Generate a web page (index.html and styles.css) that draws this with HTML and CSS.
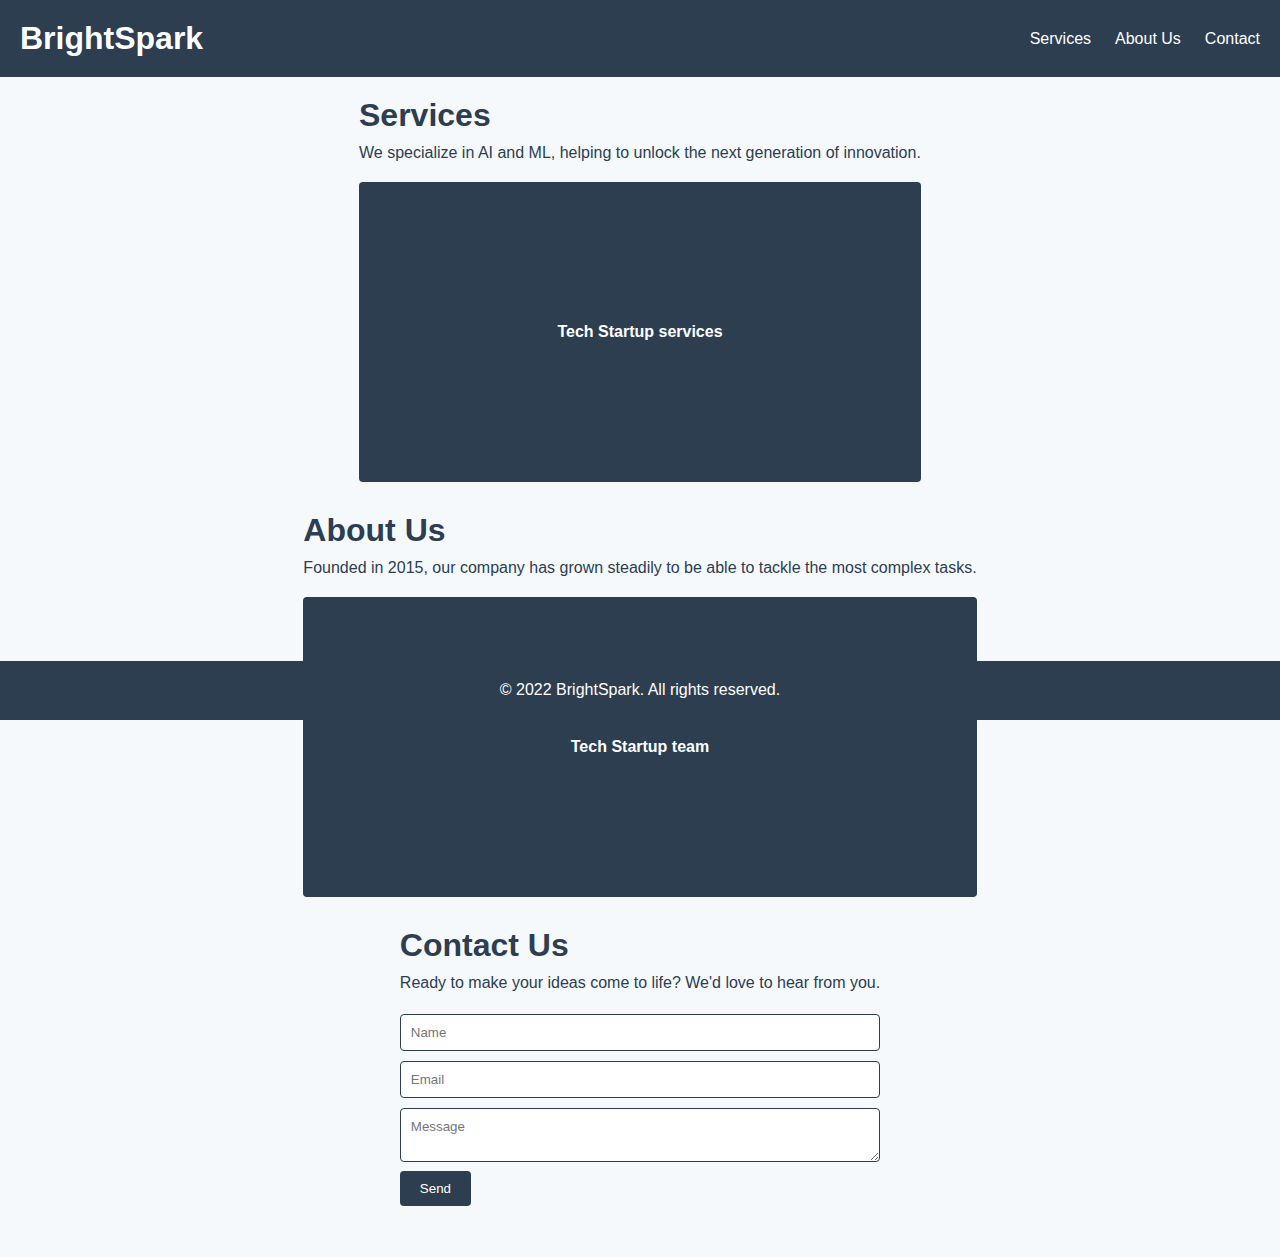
FILE: index.html
```html
<!DOCTYPE html>
<html lang="en">
<head>
<meta charset="utf-8">
<title>BrightSpark</title>
<link rel="stylesheet" href="styles.css">
</head>
<body>
<header class="site-header">
  <h1 class="logo">BrightSpark</h1>
  <nav class="nav">
    <a href="#services">Services</a>
    <a href="#about">About Us</a>
    <a href="#contact">Contact</a>
  </nav>
</header>
<main class="main">
  <section class="section" id="services">
    <h2 class="section-title">Services</h2>
    <p class="section-text">We specialize in AI and ML, helping to unlock the next generation of innovation.</p>
    <div class="media media-services">Tech Startup services</div>
  </section>
  <section class="section" id="about">
    <h2 class="section-title">About Us</h2>
    <p class="section-text">Founded in 2015, our company has grown steadily to be able to tackle the most complex tasks.</p>
    <div class="media media-about">Tech Startup team</div>
  </section>
  <section class="section" id="contact">
    <h2 class="section-title">Contact Us</h2>
    <p class="section-text">Ready to make your ideas come to life? We'd love to hear from you.</p>
    <form class="form">
      <input class="field" type="text" placeholder="Name">
      <input class="field" type="email" placeholder="Email">
      <textarea class="field" placeholder="Message"></textarea>
      <button class="btn" type="button">Send</button>
    </form>
  </section>
</main>
<footer class="footer">© 2022 BrightSpark. All rights reserved.</footer>
</body>
</html>
```
FILE: styles.css
```css
html, body {
  margin: 0;
  padding: 0;
}
body {
  font-family: "Liberation Sans", Arial, sans-serif;
  background: #f5f9fc;
  color: #2c3e50;
  position: relative;
}
.site-header {
  display: flex;
  justify-content: space-between;
  align-items: center;
  padding: 20px;
  background: #2c3e50;
  color: #fff;
}
.logo {
  margin: 0;
  font-size: 32px;
  font-weight: bold;
  line-height: normal;
}
.nav {
  display: flex;
  gap: 24px;
}
.nav a {
  color: #fff;
  text-decoration: none;
  font-size: 16px;
}
.main {
  display: flex;
  flex-direction: column;
  align-items: center;
  padding-bottom: 50px;
}
.section {
  padding-top: 20px;
}
.section-title {
  margin: 0 0 10px;
  font-size: 32px;
  line-height: normal;
}
.section-text {
  margin: 0 0 20px;
  font-size: 16px;
  line-height: normal;
}
.media {
  display: flex;
  align-items: center;
  justify-content: center;
  height: 300px;
  margin-bottom: 10px;
  background: #2c3e50;
  color: #fff;
  font-weight: bold;
  font-size: 16px;
  border-radius: 4px;
}
.media-services {
  width: 562px;
}
.media-about {
  width: 100%;
}
.form {
  display: flex;
  flex-direction: column;
  align-items: flex-start;
  gap: 10px;
  padding-top: 2px;
}
.field {
  display: block;
  box-sizing: border-box;
  width: 100%;
  margin: 0;
  padding: 10px;
  border: 1px solid #2c3e50;
  border-radius: 4px;
  background: #fff;
  font-family: "Liberation Sans", Arial, sans-serif;
  font-size: 13.333px;
  color: #2c3e50;
}
textarea.field {
  height: 54px;
}
.field::placeholder {
  color: #757575;
}
.btn {
  margin-top: -1px;
  padding: 10px 20px;
  border: none;
  border-radius: 4px;
  background: #2c3e50;
  color: #fff;
  font-family: "Liberation Sans", Arial, sans-serif;
  font-size: 13.333px;
  line-height: 15px;
}
.footer {
  position: absolute;
  top: 661px;
  left: 0;
  right: 0;
  padding: 20px;
  background: #2c3e50;
  color: #fff;
  text-align: center;
  font-size: 16px;
  line-height: normal;
  box-sizing: border-box;
  height: 59px;
}
```
